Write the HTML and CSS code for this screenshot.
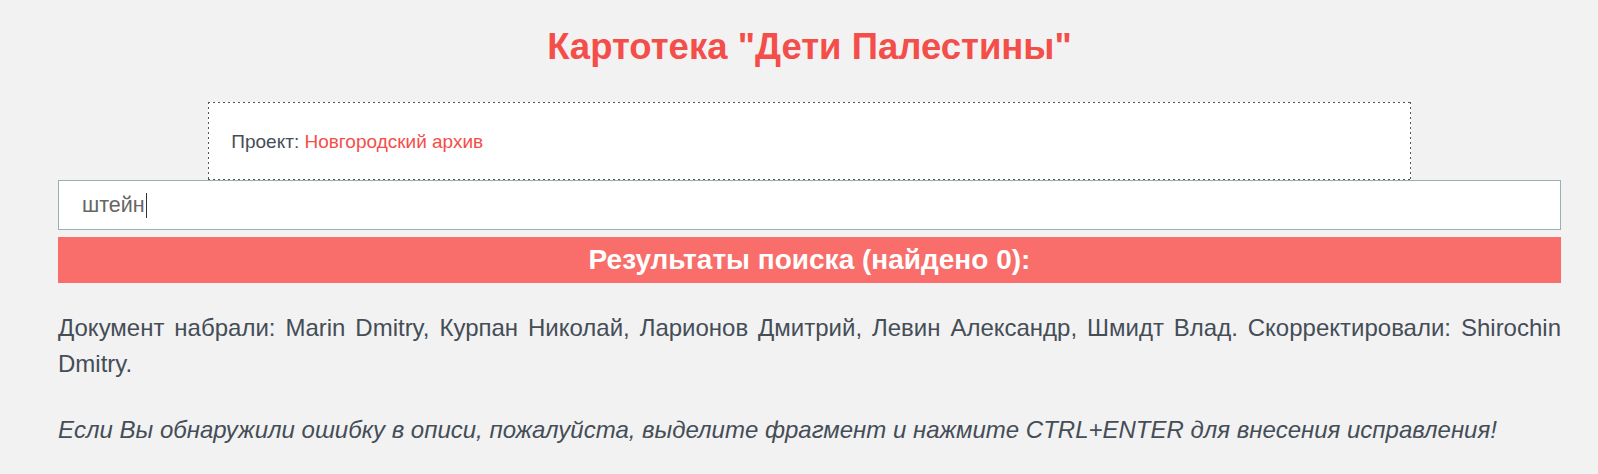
FILE: index.html
```html
<!DOCTYPE html>
<html lang="ru">
<head>
<meta charset="utf-8">
<title>Картотека "Дети Палестины"</title>
<link rel="stylesheet" href="styles.css">
</head>
<body>
<div class="page">
  <h1 class="title">Картотека "Дети Палестины"</h1>
  <div class="project">Проект: <span class="project-name">Новгородский архив</span></div>
  <div class="search"><span class="search-text">штейн</span><span class="caret"></span></div>
  <div class="results">Результаты поиска (найдено 0):</div>
  <p class="credits">Документ набрали: Marin Dmitry, Курпан Николай, Ларионов Дмитрий, Левин Александр, Шмидт Влад. Скорректировали: Shirochin Dmitry.</p>
  <p class="note">Если Вы обнаружили ошибку в описи, пожалуйста, выделите фрагмент и нажмите CTRL+ENTER для внесения исправления!</p>
</div>
</body>
</html>
```
FILE: styles.css
```css
html, body {
  margin: 0;
  padding: 0;
  background: #f2f2f2;
}
body {
  font-family: "Liberation Sans", Arial, sans-serif;
  color: #454d57;
}
.page {
  margin: 0 37px 0 58px;
  padding-top: 25px;
}
.title {
  margin: 0 0 33px;
  font-size: 36.5px;
  font-weight: bold;
  color: #f44e4a;
  text-align: center;
  line-height: 44px;
}
.project {
  width: 80%;
  margin: 0 auto;
  box-sizing: border-box;
  height: 78px;
  padding: 29px 23px 0;
  font-size: 19px;
  line-height: 22px;
  color: #454d57;
  background:
    repeating-linear-gradient(to right, #555 0 2px, transparent 2px 5px) left top / 100% 1px no-repeat,
    repeating-linear-gradient(to right, #555 0 2px, transparent 2px 5px) left bottom / 100% 1px no-repeat,
    repeating-linear-gradient(to bottom, #555 0 2px, transparent 2px 5px) left top / 1px 100% no-repeat,
    repeating-linear-gradient(to bottom, #555 0 2px, transparent 2px 5px) right top / 1px 100% no-repeat,
    #fff;
}
.project-name {
  color: #f44e4a;
}
.search {
  height: 50px;
  box-sizing: border-box;
  background: #fff;
  border: 1px solid #9ab0b5;
  padding: 0 23px;
  display: flex;
  align-items: center;
  font-size: 21.5px;
  color: #666;
}
.caret {
  display: inline-block;
  width: 1px;
  height: 25px;
  background: #333;
  margin-left: 1px;
}
.results {
  margin-top: 7px;
  height: 46px;
  background: #f96d6a;
  color: #fff;
  font-weight: bold;
  font-size: 28px;
  line-height: 46px;
  text-align: center;
}
.credits {
  margin: 27px 0 0;
  font-size: 24px;
  line-height: 36px;
  text-align: justify;
}
.note {
  margin: 30px 0 0;
  font-size: 24px;
  line-height: 36px;
  font-style: italic;
}
```
